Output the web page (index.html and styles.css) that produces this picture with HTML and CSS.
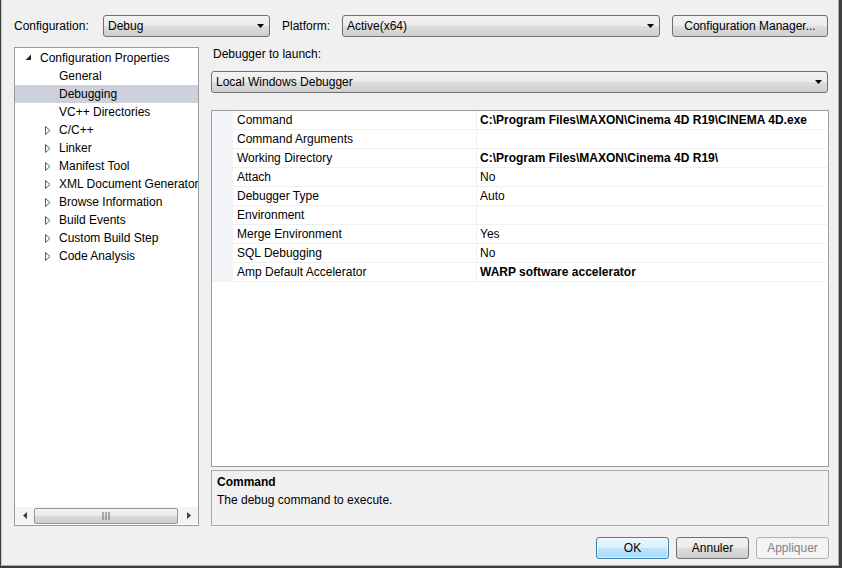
FILE: index.html
```html
<!DOCTYPE html>
<html>
<head>
<meta charset="utf-8">
<title>Property Pages</title>
<link rel="stylesheet" href="styles.css">
</head>
<body>
<div class="window">
  <div class="topbar">
    <span class="lbl lbl-config">Configuration:</span>
    <div class="combo combo-config"><span>Debug</span><svg class="dd" width="7" height="4" viewBox="0 0 7 4"><path d="M0 0H7L3.5 4Z"/></svg></div>
    <span class="lbl lbl-platform">Platform:</span>
    <div class="combo combo-platform"><span>Active(x64)</span><svg class="dd" width="7" height="4" viewBox="0 0 7 4"><path d="M0 0H7L3.5 4Z"/></svg></div>
    <button class="btn btn-cfgmgr">Configuration Manager...</button>
  </div>

  <div class="main">
    <div class="tree">
      <ul class="tree-list">
        <li class="node lvl0"><span class="caret"><svg width="7" height="7" viewBox="0 0 7 7"><path d="M6 0.5V6H0.5Z" fill="#262626"/></svg></span>Configuration Properties</li>
        <li class="node lvl1"><span class="caret"></span>General</li>
        <li class="node lvl1 selected"><span class="caret"></span>Debugging</li>
        <li class="node lvl1"><span class="caret"></span>VC++ Directories</li>
        <li class="node lvl1"><span class="caret"><svg width="6" height="9" viewBox="0 0 6 9"><path d="M0.5 0.5L5 4.5L0.5 8.5Z" fill="#fff" stroke="#5a5a5a"/></svg></span>C/C++</li>
        <li class="node lvl1"><span class="caret"><svg width="6" height="9" viewBox="0 0 6 9"><path d="M0.5 0.5L5 4.5L0.5 8.5Z" fill="#fff" stroke="#5a5a5a"/></svg></span>Linker</li>
        <li class="node lvl1"><span class="caret"><svg width="6" height="9" viewBox="0 0 6 9"><path d="M0.5 0.5L5 4.5L0.5 8.5Z" fill="#fff" stroke="#5a5a5a"/></svg></span>Manifest Tool</li>
        <li class="node lvl1"><span class="caret"><svg width="6" height="9" viewBox="0 0 6 9"><path d="M0.5 0.5L5 4.5L0.5 8.5Z" fill="#fff" stroke="#5a5a5a"/></svg></span>XML Document Generator</li>
        <li class="node lvl1"><span class="caret"><svg width="6" height="9" viewBox="0 0 6 9"><path d="M0.5 0.5L5 4.5L0.5 8.5Z" fill="#fff" stroke="#5a5a5a"/></svg></span>Browse Information</li>
        <li class="node lvl1"><span class="caret"><svg width="6" height="9" viewBox="0 0 6 9"><path d="M0.5 0.5L5 4.5L0.5 8.5Z" fill="#fff" stroke="#5a5a5a"/></svg></span>Build Events</li>
        <li class="node lvl1"><span class="caret"><svg width="6" height="9" viewBox="0 0 6 9"><path d="M0.5 0.5L5 4.5L0.5 8.5Z" fill="#fff" stroke="#5a5a5a"/></svg></span>Custom Build Step</li>
        <li class="node lvl1"><span class="caret"><svg width="6" height="9" viewBox="0 0 6 9"><path d="M0.5 0.5L5 4.5L0.5 8.5Z" fill="#fff" stroke="#5a5a5a"/></svg></span>Code Analysis</li>
      </ul>
      <div class="hscroll">
        <span class="sarrow"><svg width="4" height="7" viewBox="0 0 4 7"><path d="M4 0V7L0 3.5Z" fill="#404040"/></svg></span>
        <div class="strack">
          <div class="thumb"><svg width="8" height="8" viewBox="0 0 8 8"><path d="M1 0V8M4 0V8M7 0V8" stroke="#6a6a6a" stroke-width="1"/></svg></div>
        </div>
        <span class="sarrow"><svg width="4" height="7" viewBox="0 0 4 7"><path d="M0 0V7L4 3.5Z" fill="#404040"/></svg></span>
      </div>
    </div>

    <div class="right">
      <div class="launch-lbl">Debugger to launch:</div>
      <div class="combo combo-launch"><span>Local Windows Debugger</span><svg class="dd" width="7" height="4" viewBox="0 0 7 4"><path d="M0 0H7L3.5 4Z"/></svg></div>

      <div class="grid">
        <div class="row active"><span class="gut"></span><span class="name">Command</span><span class="val b">C:\Program Files\MAXON\Cinema 4D R19\CINEMA 4D.exe</span></div>
        <div class="row"><span class="gut"></span><span class="name">Command Arguments</span><span class="val"></span></div>
        <div class="row"><span class="gut"></span><span class="name">Working Directory</span><span class="val b">C:\Program Files\MAXON\Cinema 4D R19\</span></div>
        <div class="row"><span class="gut"></span><span class="name">Attach</span><span class="val">No</span></div>
        <div class="row"><span class="gut"></span><span class="name">Debugger Type</span><span class="val">Auto</span></div>
        <div class="row"><span class="gut"></span><span class="name">Environment</span><span class="val"></span></div>
        <div class="row"><span class="gut"></span><span class="name">Merge Environment</span><span class="val">Yes</span></div>
        <div class="row"><span class="gut"></span><span class="name">SQL Debugging</span><span class="val">No</span></div>
        <div class="row"><span class="gut"></span><span class="name">Amp Default Accelerator</span><span class="val b">WARP software accelerator</span></div>
      </div>

      <div class="desc">
        <div class="desc-title">Command</div>
        <div class="desc-text">The debug command to execute.</div>
      </div>
    </div>
  </div>

  <div class="buttons">
    <button class="btn btn-ok">OK</button>
    <button class="btn">Annuler</button>
    <button class="btn btn-disabled">Appliquer</button>
  </div>
</div>
</body>
</html>
```

FILE: styles.css
```css
* { box-sizing: border-box; }
html, body { margin: 0; padding: 0; }
body {
  width: 842px;
  height: 568px;
  overflow: hidden;
  background: #f0f0f0;
  font-family: "Liberation Sans", Arial, sans-serif;
  font-size: 12px;
  color: #000;
}
.window {
  width: 842px;
  height: 568px;
  background: #f0f0f0;
  border-left: 1px solid #3f3f3f;
  border-right: 3px solid #3f3f3f;
  border-bottom: 2px solid #3f3f3f;
  box-shadow: inset 1px 0 0 #c8c8c8, inset -1px -1px 0 #a8a8a8;
  padding: 15px 10px 0 13px;
  display: flex;
  flex-direction: column;
}

/* top bar */
.topbar {
  display: flex;
  align-items: center;
  height: 22px;
}
.lbl { line-height: 22px; }
.lbl-config { width: 89px; }
.lbl-platform { width: 60px; margin-left: 12px; }

.combo {
  height: 22px;
  border: 1px solid #707070;
  border-radius: 3px;
  background: linear-gradient(#f2f2f2 0%, #ebebeb 50%, #dddddd 51%, #cfcfcf 100%);
  display: flex;
  align-items: center;
  justify-content: space-between;
  padding: 0 5px 0 4px;
  line-height: 20px;
}
.combo .dd { fill: #000; flex: none; }
.combo-config { width: 167px; }
.combo-platform { width: 318px; }
.combo-launch { width: 617px; margin-top: 9px; }

.btn {
  font-family: "Liberation Sans", Arial, sans-serif;
  font-size: 12px;
  color: #000;
  height: 22px;
  border: 1px solid #707070;
  border-radius: 3px;
  background: linear-gradient(#f2f2f2 0%, #ebebeb 50%, #dddddd 51%, #cfcfcf 100%);
  padding: 0;
  margin: 0;
  width: 73px;
}
.btn-cfgmgr { width: 156px; margin-left: 12px; }

/* main */
.main {
  display: flex;
  gap: 12px;
  margin-top: 10px;
  height: 480px;
}
.tree {
  width: 185px;
  height: 479px;
  background: #fff;
  border: 1px solid #9b9b9b;
  display: flex;
  flex-direction: column;
}
.tree-list {
  list-style: none;
  margin: 0;
  padding: 1px 0 0 0;
  flex: 1;
}
.node {
  height: 18px;
  line-height: 18px;
  display: flex;
  align-items: center;
  white-space: nowrap;
  overflow: hidden;
}
.node.selected { background: #cdd1dc; }
.lvl0 { padding-left: 10px; }
.lvl1 { padding-left: 30px; }
.caret {
  display: inline-flex;
  align-items: center;
  width: 15px;
  height: 18px;
  flex: none;
}
.lvl1 .caret { width: 14px; }
.lvl0 .caret svg { margin-top: -2px; }

.hscroll {
  height: 17px;
  margin-bottom: 1px;
  background: #f4f4f4;
  display: flex;
  align-items: center;
}
.sarrow {
  width: 19px;
  height: 17px;
  display: flex;
  align-items: center;
  justify-content: center;
  flex: none;
}
.strack {
  flex: 1;
  height: 17px;
  display: flex;
  align-items: center;
}
.thumb {
  width: 144px;
  height: 16px;
  border: 1px solid #979797;
  border-radius: 2px;
  background: linear-gradient(#f3f3f3 0%, #e8e8e8 50%, #d9d9d9 51%, #cfcfcf 100%);
  display: flex;
  align-items: center;
  justify-content: center;
}

/* right column */
.right {
  width: 617px;
  display: flex;
  flex-direction: column;
}
.launch-lbl {
  height: 15px;
  line-height: 15px;
  padding-left: 2px;
}
.grid {
  margin-top: 17px;
  width: 618px;
  height: 357px;
  border: 1px solid #9b9b9b;
  background: #fff;
}
.row {
  display: grid;
  grid-template-columns: 21px 244px 1fr;
  height: 19px;
}
.gut { background: #f2f4f8; }
.name, .val {
  line-height: 18px;
  border-bottom: 1px solid #f0f0f0;
  white-space: nowrap;
  overflow: hidden;
}
.name {
  padding-left: 4px;
  border-right: 1px solid #f0f0f0;
}
.val { padding-left: 3px; margin-right: 1px; }
.b { font-weight: bold; }

.desc {
  margin-top: 3px;
  width: 618px;
  height: 56px;
  border: 1px solid #a9a9a9;
  background: #f0f0f0;
  padding: 3px 5px;
}
.desc-title { font-weight: bold; line-height: 16px; }
.desc-text { line-height: 18px; margin-top: 1px; }

/* buttons */
.buttons {
  display: flex;
  justify-content: flex-end;
  gap: 7px;
  margin-top: 10px;
  padding-right: 0;
}
.btn-ok {
  border-color: #3c7fb1;
  background: linear-gradient(#eaf6fd 0%, #d9f0fc 50%, #bee6fd 51%, #a7d9f5 100%);
  box-shadow: inset 0 0 0 1px rgba(255,255,255,0.6);
}
.btn-disabled {
  color: #838383;
  border-color: #adb2b5;
  background: #f4f4f4;
}
```
